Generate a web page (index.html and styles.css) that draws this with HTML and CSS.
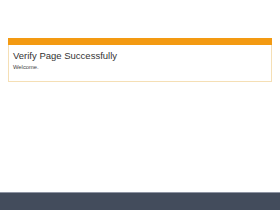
FILE: index.html
```html
<!DOCTYPE html>
<html lang="en">
<head>
    <meta charset="UTF-8">
    <meta name="viewport" content="width=device-width, initial-scale=1.0">
    <title>Verify Page</title>
    <link rel="stylesheet" href="styles.css">
</head>
<body>
    <div class="page">
        <div class="panel">
            <div class="panel-bar"></div>
            <div class="panel-body">
                <h1>Verify Page Successfully</h1>
                <p>Welcome.</p>
            </div>
        </div>
    </div>
    <div class="footer"></div>
</body>
</html>
```

FILE: styles.css
```css
html, body {
    margin: 0;
    padding: 0;
}
body {
    font-family: "Liberation Sans", Arial, sans-serif;
    background-color: #fff;
    min-height: 210px;
    display: flex;
    flex-direction: column;
}
.page {
    flex: 1;
    padding: 38px 8px 0 8px;
}
.panel {
    border: 1px solid #f5dfb5;
    border-top: none;
    background: white;
}
.panel-bar {
    height: 7px;
    margin: 0 -1px;
    background-color: #f39a12;
}
.panel-body {
    padding: 5px 4px 11px 4px;
}
h1 {
    margin: 0;
    font-size: 9.5px;
    font-weight: normal;
    color: #333;
}
p {
    margin: 3px 0 0 0;
    font-size: 5.8px;
    color: #444;
}
.footer {
    height: 17px;
    background-color: #434c5c;
    border-top: 1px solid #8e94a3;
}
```
